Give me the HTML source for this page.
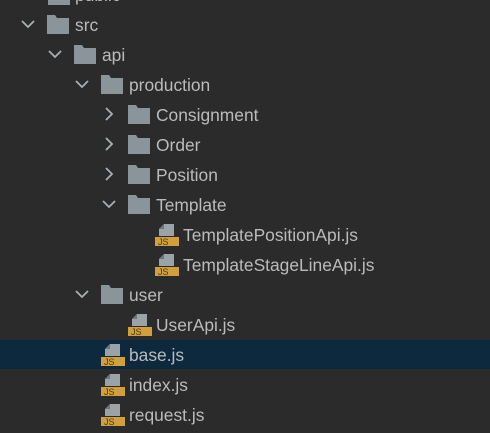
<!DOCTYPE html>
<html><head><style>
html,body{margin:0;padding:0;}
body{width:490px;height:433px;background:#2b2b2b;position:relative;overflow:hidden;font-family:"Liberation Sans",sans-serif;color:#bbbbbb;font-size:17.4px;}
.sel{position:absolute;left:0;top:340px;width:490px;height:29px;background:#0d293e;}
.r{position:absolute;height:30px;line-height:30px;white-space:nowrap;}
svg{position:absolute;}
</style></head><body>
<div class="sel"></div>
<svg width="490" height="433" style="left:0;top:0">
<defs>
<g id="fo"><path d="M0 0h8l2 3h12v16h-22z" fill="#8a949b"/></g>
<g id="cd"><path d="M0 0l6 6l6-6" fill="none" stroke="#a9b0b5" stroke-width="1.8"/></g>
<g id="cr"><path d="M0 0l6 6l-6 6" fill="none" stroke="#a9b0b5" stroke-width="1.8"/></g>
<g id="js"><path d="M5 0h10v12h-15v-7z" fill="#9aa3a8"/><path d="M5 0v5h-5" fill="#6d767b"/><rect x="-4" y="13" width="24" height="9" fill="#d1a03c"/><text x="-1" y="21" font-size="9" fill="#4a3a1a" font-family="Liberation Sans">JS</text></g>
</defs>
<use href="#fo" x="48" y="-14"/>
<use href="#cd" x="22" y="21"/><use href="#fo" x="47" y="15"/>
<use href="#cd" x="49" y="51"/><use href="#fo" x="74" y="45"/>
<use href="#cd" x="76" y="81"/><use href="#fo" x="101" y="75"/>
<use href="#cr" x="106" y="108"/><use href="#fo" x="128" y="105"/>
<use href="#cr" x="106" y="138"/><use href="#fo" x="128" y="135"/>
<use href="#cr" x="106" y="168"/><use href="#fo" x="128" y="165"/>
<use href="#cd" x="103" y="201"/><use href="#fo" x="128" y="195"/>
<use href="#js" x="159" y="224"/>
<use href="#js" x="159" y="254"/>
<use href="#cd" x="76" y="291"/><use href="#fo" x="101" y="285"/>
<use href="#js" x="132" y="314"/>
<use href="#js" x="105" y="344"/>
<use href="#js" x="105" y="374"/>
<use href="#js" x="105" y="404"/>
</svg>
<div class="r" style="left:75px;top:-20px">public</div>
<div class="r" style="left:75px;top:10px">src</div>
<div class="r" style="left:102px;top:40px">api</div>
<div class="r" style="left:129px;top:70px">production</div>
<div class="r" style="left:156px;top:100px">Consignment</div>
<div class="r" style="left:156px;top:130px">Order</div>
<div class="r" style="left:156px;top:160px">Position</div>
<div class="r" style="left:156px;top:190px">Template</div>
<div class="r" style="left:183px;top:220px">TemplatePositionApi.js</div>
<div class="r" style="left:183px;top:250px">TemplateStageLineApi.js</div>
<div class="r" style="left:129px;top:280px">user</div>
<div class="r" style="left:156px;top:310px">UserApi.js</div>
<div class="r" style="left:129px;top:340px">base.js</div>
<div class="r" style="left:129px;top:370px">index.js</div>
<div class="r" style="left:129px;top:400px">request.js</div>
</body></html>
